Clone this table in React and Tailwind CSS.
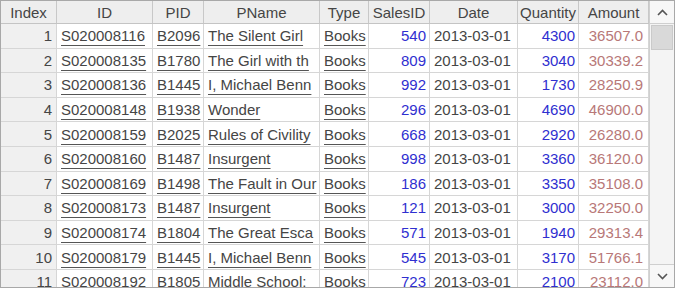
const headers = ['Index', 'ID', 'PID', 'PName', 'Type', 'SalesID', 'Date', 'Quantity', 'Amount'];

const rows = [
  [1, 'S020008116', 'B2096', 'The Silent Girl', 'Books', 540, '2013-03-01', 4300, '36507.0'],
  [2, 'S020008135', 'B1780', 'The Girl with th', 'Books', 809, '2013-03-01', 3040, '30339.2'],
  [3, 'S020008136', 'B1445', 'I, Michael Benn', 'Books', 992, '2013-03-01', 1730, '28250.9'],
  [4, 'S020008148', 'B1938', 'Wonder', 'Books', 296, '2013-03-01', 4690, '46900.0'],
  [5, 'S020008159', 'B2025', 'Rules of Civility', 'Books', 668, '2013-03-01', 2920, '26280.0'],
  [6, 'S020008160', 'B1487', 'Insurgent', 'Books', 998, '2013-03-01', 3360, '36120.0'],
  [7, 'S020008169', 'B1498', 'The Fault in Our', 'Books', 186, '2013-03-01', 3350, '35108.0'],
  [8, 'S020008173', 'B1487', 'Insurgent', 'Books', 121, '2013-03-01', 3000, '32250.0'],
  [9, 'S020008174', 'B1804', 'The Great Esca', 'Books', 571, '2013-03-01', 1940, '29313.4'],
  [10, 'S020008179', 'B1445', 'I, Michael Benn', 'Books', 545, '2013-03-01', 3170, '51766.1'],
  [11, 'S020008192', 'B1805', 'Middle School:', 'Books', 723, '2013-03-01', 2100, '23112.0'],
];

const grid = 'grid grid-cols-[56px_96px_51px_116px_49px_61px_88px_61px_70px]';

function LinkText({ children }) {
  return (
    <span className="underline decoration-[#555] decoration-1 underline-offset-[4px]">{children}</span>
  );
}

function Row({ r }) {
  const cell = 'flex items-center overflow-hidden whitespace-nowrap border-r border-b border-[#d6d6d6]';
  return (
    <div className={`${grid} h-[24.6px]`}>
      <div className={`${cell} justify-end pr-[4px] bg-[#f0f0f0] text-[#454545]`}>{r[0]}</div>
      <div className={`${cell} pl-[4px] bg-white text-[#454545]`}><LinkText>{r[1]}</LinkText></div>
      <div className={`${cell} pl-[4px] bg-white text-[#454545]`}><LinkText>{r[2]}</LinkText></div>
      <div className={`${cell} pl-[4px] bg-white text-[#454545]`}><LinkText>{r[3]}</LinkText></div>
      <div className={`${cell} pl-[4px] bg-white text-[#454545]`}><LinkText>{r[4]}</LinkText></div>
      <div className={`${cell} justify-end pr-[3px] bg-white text-[#2f2fd0]`}>{r[5]}</div>
      <div className={`${cell} pl-[4px] bg-white text-[#454545]`}>{r[6]}</div>
      <div className={`${cell} justify-end pr-[3px] bg-white text-[#2f2fd0]`}>{r[7]}</div>
      <div className={`${cell} justify-end pr-[5px] bg-white text-[#b87878]`}>{r[8]}</div>
    </div>
  );
}

function Chevron({ up }) {
  return (
    <svg width="11" height="7" viewBox="0 0 11 7">
      <polyline
        points={up ? '1,6 5.5,1.5 10,6' : '1,1 5.5,5.5 10,1'}
        fill="none"
        stroke="#555"
        strokeWidth="1.6"
      />
    </svg>
  );
}

export default function App() {
  return (
    <div
      className="w-[675px] h-[288px] border border-[#a8a8a8] bg-white flex overflow-hidden text-[15px] leading-none"
      style={{ fontFamily: '"Liberation Sans", Arial, sans-serif' }}
    >
      <div className="w-[648px] overflow-hidden">
        <div className={`${grid} h-[23px] bg-[#eeeeee] border-b border-[#c4c4c4]`}>
          {headers.map((h) => (
            <div
              key={h}
              className="flex items-center justify-center border-r border-[#c8c8c8] text-[#454545] whitespace-nowrap overflow-hidden"
            >
              {h}
            </div>
          ))}
        </div>
        {rows.map((r) => (
          <Row key={r[0]} r={r} />
        ))}
      </div>
      <div className="flex-1 flex flex-col bg-[#f4f4f4] border-l border-[#cfcfcf]">
        <div className="h-[23px] flex items-center justify-center border-b border-[#cfcfcf] bg-[#f7f7f7]">
          <Chevron up />
        </div>
        <div className="flex-1 flex flex-col pt-[1px] px-[1px]">
          <div className="h-[25px] bg-[#d9d9d9] border border-[#cacaca]" />
        </div>
        <div className="h-[23px] flex items-center justify-center border-t border-[#cfcfcf] bg-[#f7f7f7]">
          <Chevron />
        </div>
      </div>
    </div>
  );
}
